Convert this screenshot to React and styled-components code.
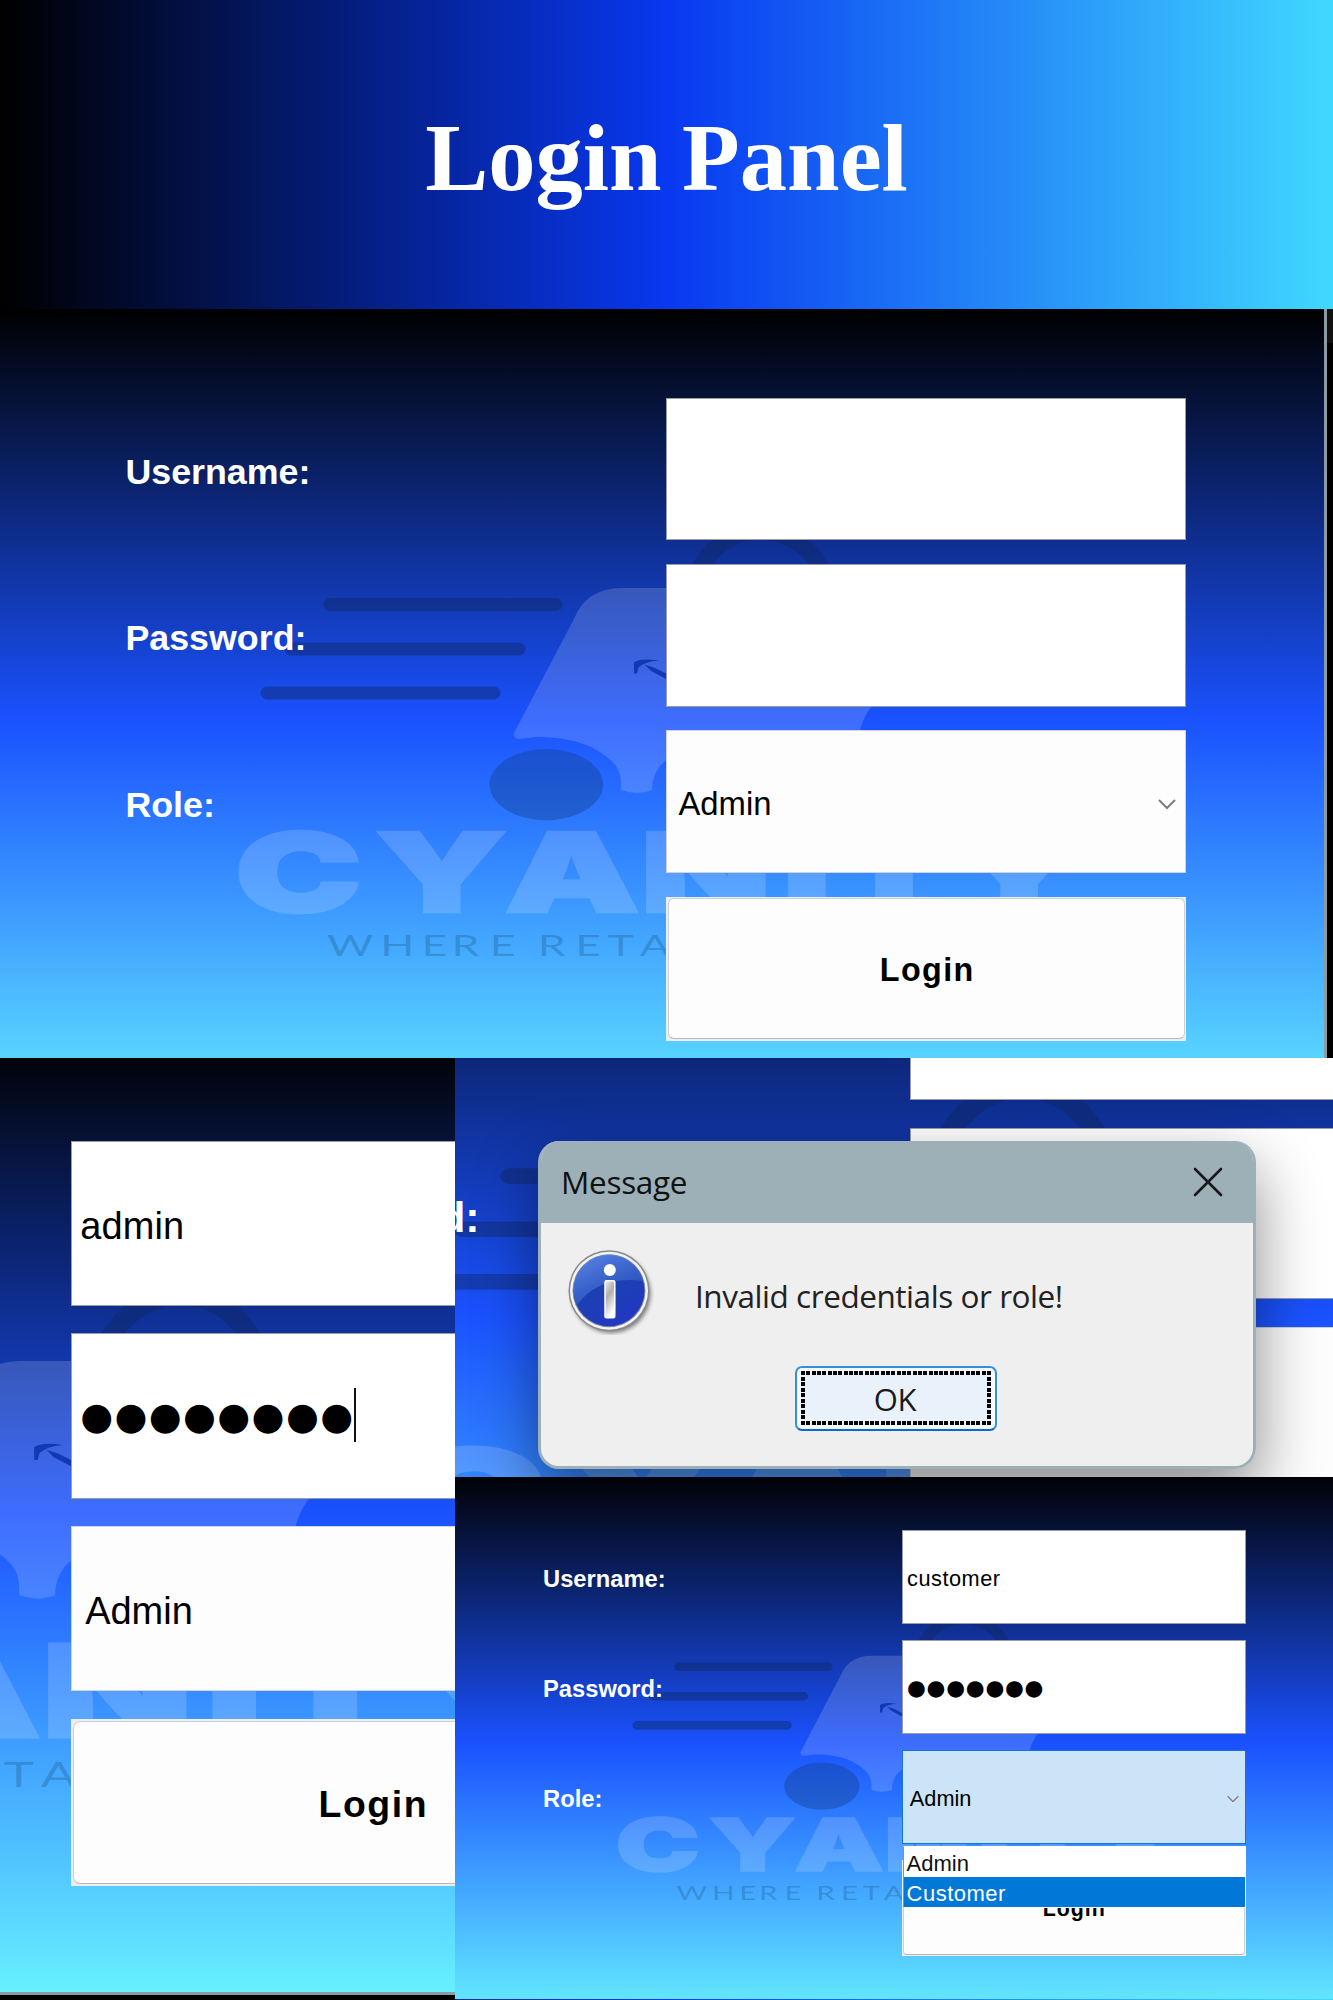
import React from "react";
import styled, { createGlobalStyle, css } from "styled-components";

const Global = createGlobalStyle`
  *, *::before, *::after { box-sizing: border-box; }
  html, body { margin: 0; padding: 0; background: #000; }
`;

/* Every login window is sized in units of --u, so one layout serves all scales. */
const u = (n) => `calc(var(--u) * ${n})`;
const arial = `"Liberation Sans", Arial, sans-serif`;
const segoe = `"Open Sans", "Noto Sans", sans-serif`;

const Page = styled.main`
  width: 1333px;
  height: 2000px;
  overflow: hidden;
  background: linear-gradient(90deg, #000 0%, #0838f0 50%, #40d8ff 100%);
  display: grid;
  grid-template-rows: 309px 749px 942px;
`;

const Banner = styled.header`
  display: flex;
  justify-content: center;
  padding-top: 104px;
`;

const Title = styled.h1`
  margin: 0;
  font: bold 94.5px/109px "Liberation Serif", "Times New Roman", serif;
  word-spacing: -3px;
  color: #fff;
  white-space: nowrap;
`;

const Lower = styled.div`
  display: grid;
  grid-template-columns: 455px 878px;
`;

const RightStack = styled.div`
  display: grid;
  grid-template-rows: 419px 522px;
`;

const Frame = styled.section`
  --u: ${(p) => p.$unit}px;
  position: relative;
  min-width: 0;
  min-height: 0;
  overflow: hidden;
  background: ${(p) => (p.$edge ? "linear-gradient(#111 0 34px, #000 34px)" : "#000")};
`;

/* $bleed widens the window's left side when the frame shows more than its edge. */
const Window = styled.div`
  --bleed: ${(p) => p.$bleed || 0}px;
  position: relative;
  width: calc(${u(1327)} + var(--bleed));
  height: ${u(826.5)};
  margin-left: ${(p) => p.$x || 0}px;
  margin-top: ${(p) => p.$y || 0}px;
  padding: ${u(88.7)} 0 0 calc(${u(125.4)} + var(--bleed));
  border-right: ${u(3)} solid #8c9ba3;
  border-bottom: ${u(3)} solid #8c9ba3;
  background: linear-gradient(180deg, #000 0%, #1a52ff 50%, #66f0ff 100%);
`;

const Mark = styled.svg`
  position: absolute;
  left: var(--bleed);
  top: 0;
  width: ${u(1324)};
  height: ${u(823)};
`;

const Form = styled.div`
  position: relative;
  display: grid;
  grid-template-columns: ${u(541.1)} ${u(520)};
  grid-auto-rows: ${u(142.8)};
  row-gap: ${u(23.5)};
`;

const Label = styled.label`
  display: flex;
  align-items: center;
  padding-top: ${u(7)};
  font: bold ${u(35.8)}/1.15 ${arial};
  color: #fff;
`;

const control = css`
  display: flex;
  align-items: center;
  font: ${u(32.8)}/1.15 ${arial};
  color: #000;
  white-space: nowrap;
`;

const Field = styled.div`
  ${control}
  border: ${u(1.1)} solid #9a9da6;
  background: #fff;
  padding: ${u(5)} 0 0 ${u(6.8)};
  letter-spacing: ${(p) => u(p.$track || 0)};
`;

const Dots = styled.span`
  margin-top: ${u(-3)};
  font: ${u(32.6)}/1 "DejaVu Sans", sans-serif;
  letter-spacing: ${u(1.15)};
`;

const Caret = styled.i`
  width: 2px;
  height: ${u(46)};
  margin-top: ${u(-7)};
  background: #111;
`;

const Select = styled.div`
  ${control}
  position: relative;
  justify-content: space-between;
  border: ${u(1.1)} solid ${(p) => (p.$open ? "#1275d2" : "#d0d3da")};
  background: ${(p) => (p.$open ? "#cce4f7" : "#fdfdfd")};
  padding: ${u(5)} ${u(9.5)} 0 ${u(11)};
`;

const Chevron = styled.svg`
  width: ${u(18)};
  height: ${u(12)};
  margin-top: ${u(-1)};
  fill: none;
  stroke: #7d7d80;
  stroke-width: 2;
`;

const Menu = styled.div`
  position: absolute;
  z-index: 2;
  top: 95px;
  left: 0;
  right: -1px;
  border: 1px solid #fff;
  border-left: 1px solid #4b9fe6;
  background: #fff;
`;

const Option = styled.div`
  height: 30px;
  padding: 4px 0 0 3px;
  font: 22px/25px ${arial};
  letter-spacing: ${(p) => (p.$active ? "0.5px" : "0")};
  color: ${(p) => (p.$active ? "#fff" : "#111")};
  background: ${(p) => (p.$active ? "#0078d7" : "#fff")};
`;

const ButtonEdge = styled.div`
  grid-column: 2;
  height: ${u(144.6)};
  padding: ${u(1.8)};
  background: #eceef0;
`;

const ButtonFace = styled.div`
  height: 100%;
  display: flex;
  align-items: center;
  justify-content: center;
  padding: ${u(3)} 0 0 ${u(1.5)};
  border: ${u(1.1)} solid #d0d0d0;
  border-bottom-color: #b9b9b9;
  border-radius: ${u(6)};
  background: #fdfdfd;
  font: bold ${u(32.3)}/1.15 ${arial};
  letter-spacing: ${u(1.4)};
  color: #000;
`;

const Dialog = styled.div`
  position: absolute;
  left: 83px;
  top: 83px;
  width: 718px;
  height: 328px;
  border: 3px solid #9db0b7;
  border-top: 0;
  border-radius: 21px;
  background: #efefef;
  overflow: hidden;
`;

const DialogShadow = styled.div`
  position: absolute;
  left: 83px;
  top: 83px;
  width: 718px;
  height: 328px;
  border-radius: 21px;
  box-shadow: 0 26px 64px rgba(0, 0, 0, 0.46);
`;

const DialogBar = styled.div`
  height: 82px;
  display: flex;
  align-items: center;
  justify-content: space-between;
  padding: 0 30px 0 20px;
  background: #9db0b7;
`;

const DialogTitle = styled.span`
  font: 31.5px/44px ${segoe};
  letter-spacing: -0.3px;
  color: #111;
`;

const DialogBody = styled.div`
  display: grid;
  grid-template-columns: 90px 1fr;
  column-gap: 40px;
  padding: 22px 0 0 24px;
`;

const DialogText = styled.p`
  margin: 29px 0 0;
  font: 31.5px/44px ${segoe};
  letter-spacing: -0.45px;
  color: #222;
  white-space: nowrap;
`;

const OkButton = styled.div`
  width: 202px;
  height: 65px;
  margin: 31px 0 0 254px;
  padding: 3px;
  border: 2px solid #3390dd;
  border-bottom-color: #0a6cc0;
  border-radius: 7px;
  background: #f6fafd;
`;

const FocusRing = styled.div`
  width: 190px;
  height: 54px;
  display: flex;
  align-items: center;
  justify-content: center;
  padding: 2px 2px 0 0;
  margin-left: 1px;
  font: 31px/40px ${segoe};
  letter-spacing: -0.3px;
  color: #1a1a1a;
  background:
    repeating-linear-gradient(90deg, #000 0 4px, transparent 4px 5.314px) top / 100% 4px no-repeat,
    repeating-linear-gradient(90deg, #000 0 4px, transparent 4px 5.314px) bottom / 100% 4px no-repeat,
    repeating-linear-gradient(180deg, #000 0 4px, transparent 4px 5.556px) left / 4px 100% no-repeat,
    repeating-linear-gradient(180deg, #000 0 4px, transparent 4px 5.556px) right / 4px 100% no-repeat,
    #e9f2fb;
`;

function BrandMark() {
  return (
    <Mark viewBox="0 309 1324 823">
      <g stroke="#0e2760" strokeOpacity="0.42" strokeWidth="13" strokeLinecap="round" fill="none">
        <path d="M330 604.5H556M291 649H519M267 693H494" />
        <path d="M690 599A71 77 0 0 1 831 599" strokeWidth="17" strokeLinecap="butt" />
      </g>
      <ellipse cx="546.3" cy="784.7" rx="56.8" ry="35.6" fill="#12408f" fillOpacity="0.42" />
      <path
        d="M514 733L574 619Q586 588 622 588H890Q925 588 915 640L871 707Q861 721 859 735C820 737 790 760 700 745Q672 752 660 766Q652 776 652 790Q638 796 621 790C622 772 618 764 600 752C580 739 555 737 536 737L519 739Q513 739 514 733Z"
        fill="#fff"
        fillOpacity="0.16"
      />
      <g fill="#1238b4">
        <path d="M634 673.500V662.500Q640 657.500 659 660.500Q645 661.500 638.500 667.500L637 673.500Z" />
        <path d="M644.500 664.500L655 668L667 674V679.500L651 671Z" />
      </g>
      <g transform="scale(1.55 1)" fill="#fff" stroke="#fff" strokeWidth="2.600" opacity="0.16">
        <text
          x="151.500 242 325.500 413 504.500 539 614.500"
          y="912.300"
          fontFamily="Inter, sans-serif"
          fontWeight="900"
          fontSize="110"
        >
          CYANITY
        </text>
      </g>
      <g transform="scale(1.5 1)" fill="#10405f" fillOpacity="0.26">
        <text
          x="218 253.500 281 301 326.500 345 358.500 383.500 405 426.500"
          y="956"
          fontFamily="Lato, sans-serif"
          fontSize="29.800"
        >
          WHERE RETA
        </text>
      </g>
    </Mark>
  );
}

function LoginWindow({ x, y, bleed, user, track, password, caret, open }) {
  return (
    <Window $x={x} $y={y} $bleed={bleed}>
      <BrandMark />
      <Form>
        <Label>Username:</Label>
        <Field $track={track}>{user}</Field>
        <Label>Password:</Label>
        <Field>
          {password > 0 && <Dots>{"●".repeat(password)}</Dots>}
          {caret && <Caret />}
        </Field>
        <Label>Role:</Label>
        <Select $open={open}>
          Admin
          <Chevron viewBox="0 0 18 12">
            <path d="M1 2L9 10L17 2" />
          </Chevron>
          {open && (
            <Menu>
              <Option>Admin</Option>
              <Option $active>Customer</Option>
            </Menu>
          )}
        </Select>
        <ButtonEdge>
          <ButtonFace>Login</ButtonFace>
        </ButtonEdge>
      </Form>
    </Window>
  );
}

function InfoIcon() {
  return (
    <svg width="90" height="90" viewBox="0 0 90 90">
      <defs>
        <linearGradient id="disc" x1="0" y1="0" x2="0.5" y2="1">
          <stop offset="0" stopColor="#3a68d0" />
          <stop offset="0.5" stopColor="#1b40b0" />
          <stop offset="1" stopColor="#2238c0" />
        </linearGradient>
        <linearGradient id="gloss" x1="0" y1="0" x2="0.6" y2="1">
          <stop offset="0" stopColor="#6490f0" />
          <stop offset="1" stopColor="#2a52bc" />
        </linearGradient>
        <linearGradient id="stem" x1="0" y1="0" x2="0.4" y2="1">
          <stop offset="0" stopColor="#eee" />
          <stop offset="0.45" stopColor="#b0b0b0" />
          <stop offset="1" stopColor="#fff" />
        </linearGradient>
        <filter id="soft" x="-20%" y="-20%" width="140%" height="140%">
          <feGaussianBlur stdDeviation="2" />
        </filter>
      </defs>
      <circle cx="46" cy="48.500" r="39.500" fill="#000" opacity="0.5" filter="url(#soft)" />
      <circle cx="44" cy="45.700" r="40.500" fill="#8b8b8b" />
      <circle cx="44" cy="45.700" r="39" fill="#f4f4f4" />
      <circle cx="44" cy="45.700" r="36.500" fill="#8a8f9c" />
      <circle cx="44" cy="45.700" r="35.500" fill="url(#disc)" />
      <path d="M12 60A35.500 35.500 0 1 1 78.500 36Q34 30 12 60Z" fill="url(#gloss)" opacity="0.75" />
      <circle cx="44.800" cy="25" r="6" fill="#fff" />
      <rect x="40" y="35.700" width="9.800" height="37" rx="1.500" fill="url(#stem)" stroke="#fff" strokeWidth="1.500" />
    </svg>
  );
}

function MessageDialog() {
  return (
    <>
      <DialogShadow />
      <Dialog>
        <DialogBar>
          <DialogTitle>Message</DialogTitle>
          <svg width="30" height="30" viewBox="0 0 30 30" stroke="#16191b" strokeWidth="2.600" strokeLinecap="round">
            <path d="M2 2L28 28M28 2L2 28" />
          </svg>
        </DialogBar>
        <DialogBody>
          <InfoIcon />
          <DialogText>Invalid credentials or role!</DialogText>
        </DialogBody>
        <OkButton>
          <FocusRing>OK</FocusRing>
        </OkButton>
      </Dialog>
    </>
  );
}

export default function App() {
  return (
    <>
      <Global />
      <Page>
        <Banner>
          <Title>Login Panel</Title>
        </Banner>
        <Frame $unit={1} $edge>
          <LoginWindow />
        </Frame>
        <Lower>
          <Frame $unit={1.158}>
            <LoginWindow x={-700.4} y={-19.800} user="admin" track={0.1} password={8} caret />
          </Frame>
          <RightStack>
            <Frame $unit={1.195}>
              <LoginWindow x={-341.5} y={-234.800} />
              <MessageDialog />
            </Frame>
            <Frame $unit={0.6625}>
              <LoginWindow bleed={5} y={-6.200} user="customer" track={0.8} password={7} open />
            </Frame>
          </RightStack>
        </Lower>
      </Page>
    </>
  );
}
